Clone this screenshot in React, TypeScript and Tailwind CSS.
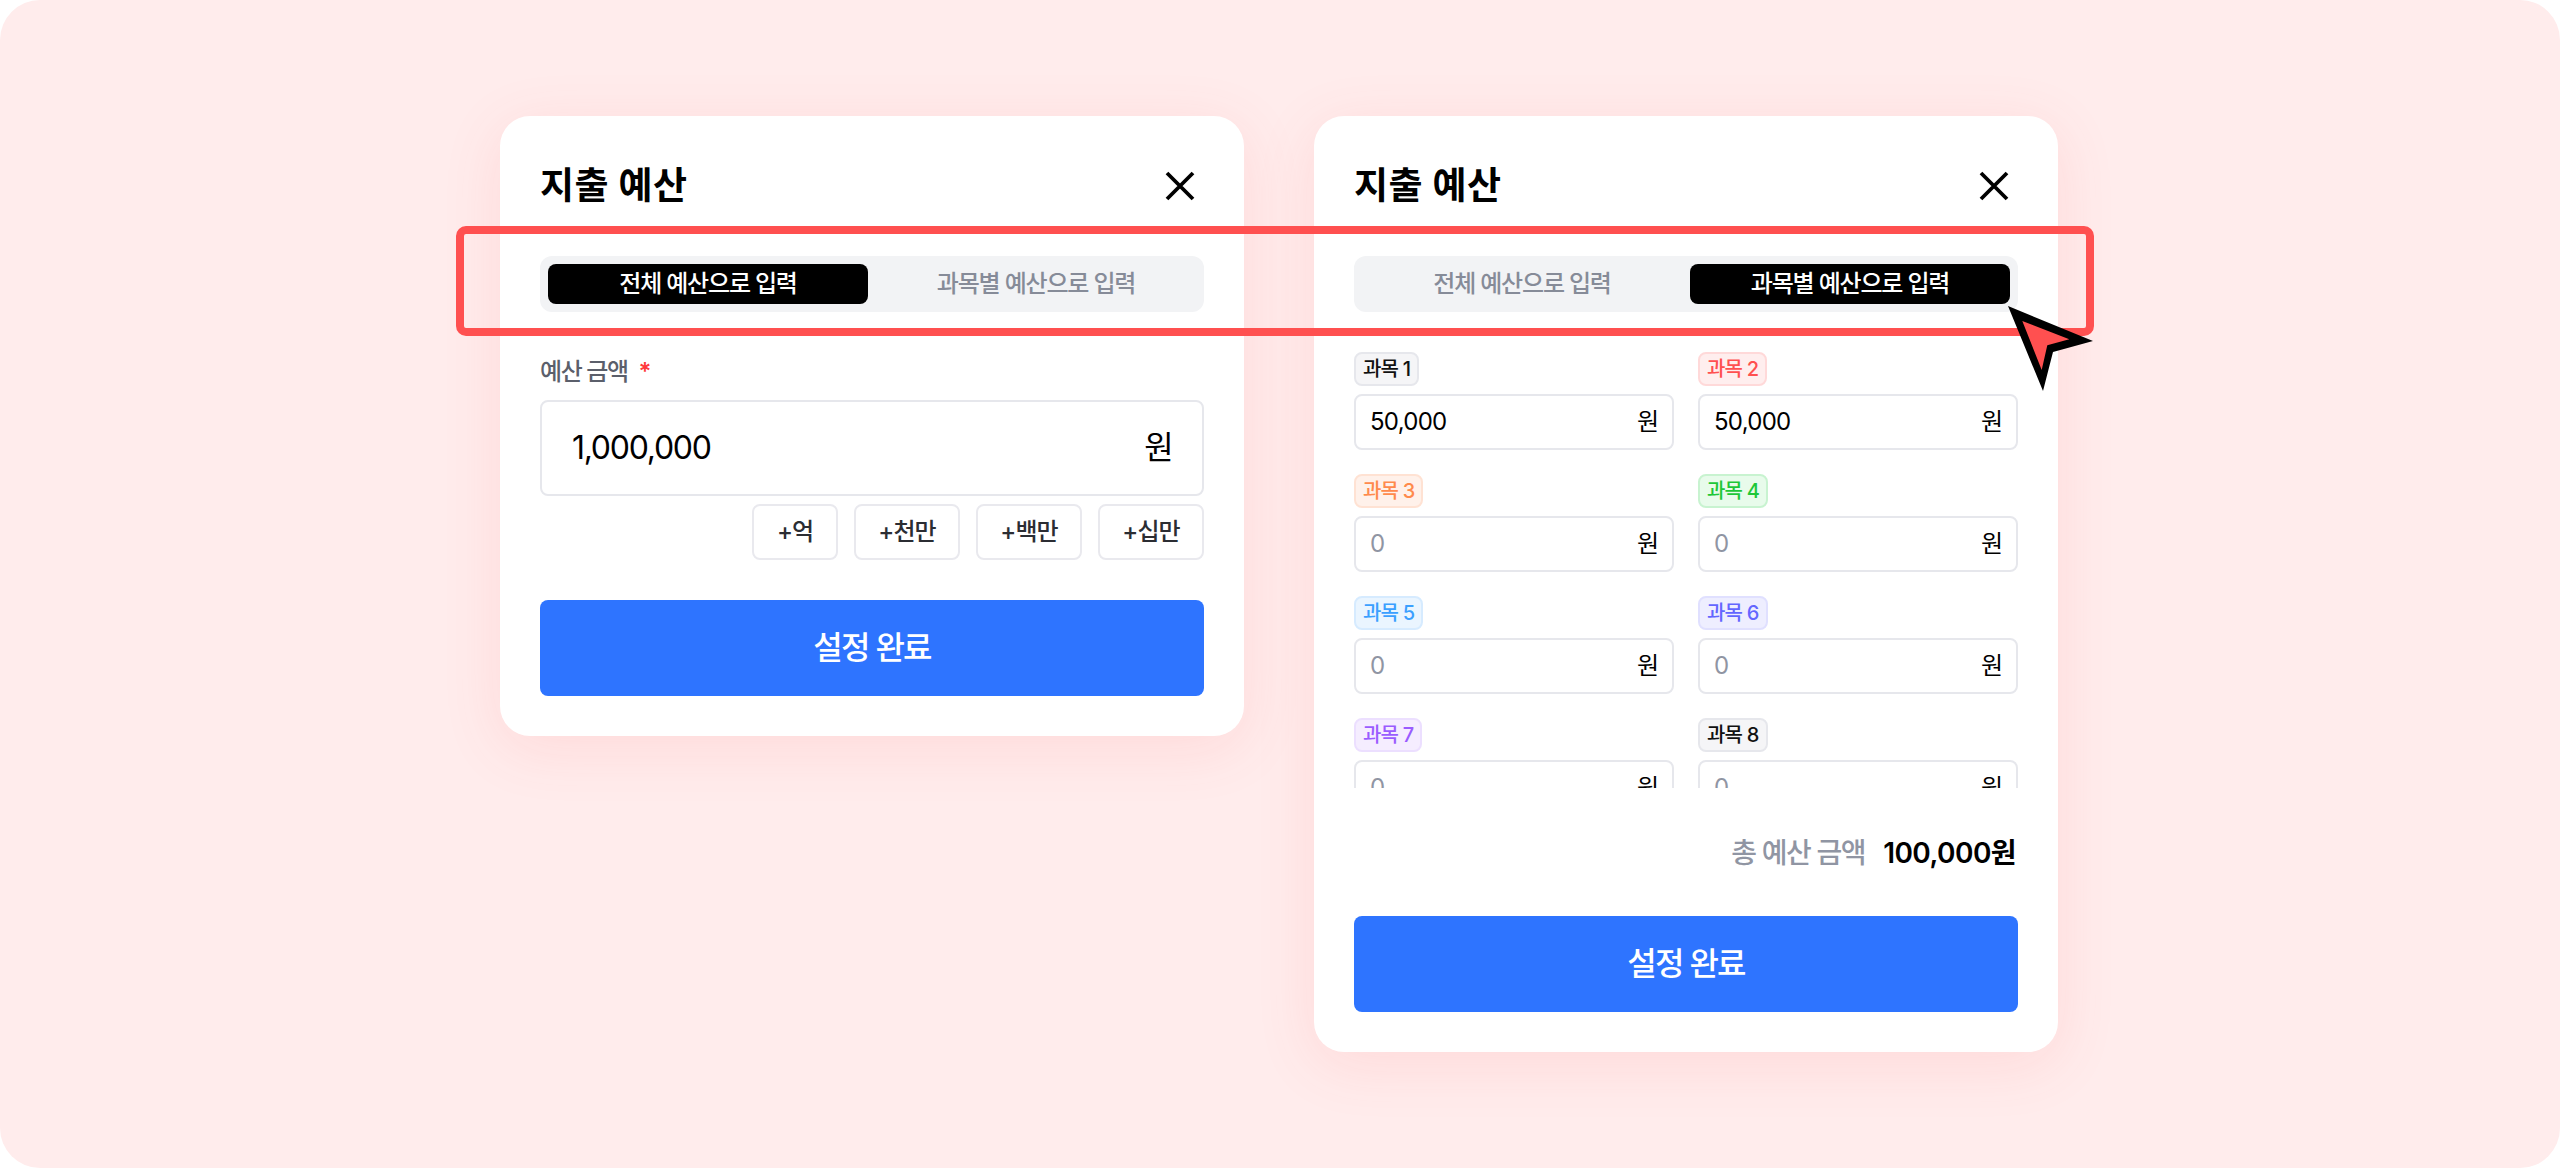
import React from "react";

const badges = [
  { n: "과목 1", c: "bg-[#f5f5f7] border-[#e6e7ec] text-[#111111]", v: "50,000" },
  { n: "과목 2", c: "bg-[#ffeeee] border-[#ffd9d9] text-[#ff5050]", v: "50,000" },
  { n: "과목 3", c: "bg-[#fff1ea] border-[#ffe2d3] text-[#ff8a4c]", v: "" },
  { n: "과목 4", c: "bg-[#e8fbeb] border-[#c8f3d0] text-[#1ec738]", v: "" },
  { n: "과목 5", c: "bg-[#eaf5ff] border-[#d6ebff] text-[#3ba0ff]", v: "" },
  { n: "과목 6", c: "bg-[#eeeeff] border-[#e0e0ff] text-[#6366ff]", v: "" },
  { n: "과목 7", c: "bg-[#f5edff] border-[#ecdfff] text-[#9a5cff]", v: "" },
  { n: "과목 8", c: "bg-[#f5f5f7] border-[#e6e7ec] text-[#111111]", v: "" },
];

function Header() {
  return (
    <div className="flex h-[58px] items-center justify-between">
      <h2 className="mt-[2px] text-[37px] font-semibold tracking-[0.01em] text-black">지출 예산</h2>
      <button className="mr-[4px] mt-[2px] h-[40px] w-[40px]" aria-label="닫기">
        <svg viewBox="0 0 40 40" className="h-[40px] w-[40px]" fill="none" stroke="#000" strokeWidth="3.8">
          <path d="M7 7 33 33M33 7 7 33" />
        </svg>
      </button>
    </div>
  );
}

function Tabs({ active }: { active: number }) {
  const items = ["전체 예산으로 입력", "과목별 예산으로 입력"];
  return (
    <div className="mt-[42px] grid h-[56px] grid-cols-2 gap-[8px] rounded-[12px] bg-[#f2f3f5] p-[8px]">
      {items.map((t, i) => (
        <button
          key={t}
          className={
            i === active
              ? "rounded-[8px] bg-black text-[24px] font-medium tracking-[-0.05em] text-white"
              : "rounded-[8px] text-[24px] font-medium tracking-[-0.05em] text-[#868b98]"
          }
        >
          {t}
        </button>
      ))}
    </div>
  );
}

function Submit() {
  return (
    <button className="h-[96px] w-full rounded-[8px] bg-[#2e74ff] text-[32px] font-medium tracking-[-0.055em] text-white">
      설정 완료
    </button>
  );
}

function Card({ children }: { children: React.ReactNode }) {
  return (
    <section className="flex w-[744px] flex-col rounded-[30px] bg-white p-[40px] shadow-[0_12px_60px_rgba(255,80,80,0.12)]">
      {children}
    </section>
  );
}

export default function App() {
  return (
    <div className="h-[1168px] bg-white font-['Inter','Noto_Sans_CJK_KR',sans-serif]">
      <div className="relative h-full overflow-hidden rounded-[40px] bg-[#ffecec]">
        <div className="flex items-start gap-[70px] pl-[500px] pt-[116px]">
          <Card>
            <Header />
            <Tabs active={0} />
            <div className="mt-[44px] flex h-[32px] items-center text-[24px] font-medium tracking-[-0.06em] text-[#5b5f6b]">
              예산 금액
              <span className="ml-[11px] font-semibold text-[#ff3b3b]">*</span>
            </div>
            <div className="mt-[12px] flex h-[96px] items-center justify-between rounded-[8px] border-2 border-[#e6e7ec] px-[30px] text-[32px] text-black">
              <span className="tracking-[-0.04em]">1,000,000</span>
              <span className="tracking-[-0.05em]">원</span>
            </div>
            <div className="mt-[8px] flex justify-end gap-[16px]">
              {[
                ["+억", "w-[86px]"],
                ["+천만", "w-[106px]"],
                ["+백만", "w-[106px]"],
                ["+십만", "w-[106px]"],
              ].map(([t, w]) => (
                <button
                  key={t}
                  className={`${w} h-[56px] rounded-[8px] border-2 border-[#e9e9ee] text-[24px] font-medium tracking-[-0.04em] text-[#2b2d33]`}
                >
                  {t}
                </button>
              ))}
            </div>
            <div className="mt-[40px]">
              <Submit />
            </div>
          </Card>
          <Card>
            <Header />
            <Tabs active={1} />
            <div className="mt-[40px] grid h-[436px] grid-cols-2 content-start gap-x-[24px] gap-y-[24px] overflow-hidden">
              {badges.map((b) => (
                <div key={b.n} className="flex flex-col items-start gap-[8px]">
                  <span
                    className={`flex h-[34px] items-center rounded-[8px] border-2 px-[7px] text-[20px] font-medium tracking-[-0.04em] ${b.c}`}
                  >
                    {b.n}
                  </span>
                  <div className="flex h-[56px] w-full shrink-0 items-center justify-between rounded-[8px] border-2 border-[#e6e7ec] px-[14px] text-[24px]">
                    <span className={b.v ? "tracking-[-0.03em] text-black" : "text-[#9095a3]"}>{b.v || "0"}</span>
                    <span className="tracking-[-0.05em] text-black">원</span>
                  </div>
                </div>
              ))}
            </div>
            <div className="mt-[45px] flex h-[40px] items-center justify-end gap-[18px] pr-[2px]">
              <span className="text-[28px] font-medium tracking-[-0.05em] text-[#9095a3]">총 예산 금액</span>
              <span className="text-[28px] font-semibold tracking-[-0.02em] text-black">100,000원</span>
            </div>
            <div className="mt-[43px]">
              <Submit />
            </div>
          </Card>
        </div>

        <div className="pointer-events-none absolute left-[456px] top-[226px] h-[110px] w-[1638px] rounded-[10px] border-[8px] border-[#ff5050]" />
        <svg className="pointer-events-none absolute left-[2000px] top-[300px] h-[100px] w-[100px]" viewBox="0 0 100 100">
          <path d="M8 6 93 41 53 52 43 91Z" fill="#000" />
          <path d="M22.3 21 69.3 39.3 47.3 45.3 41.7 70Z" fill="#ff5050" />
        </svg>
      </div>
    </div>
  );
}
